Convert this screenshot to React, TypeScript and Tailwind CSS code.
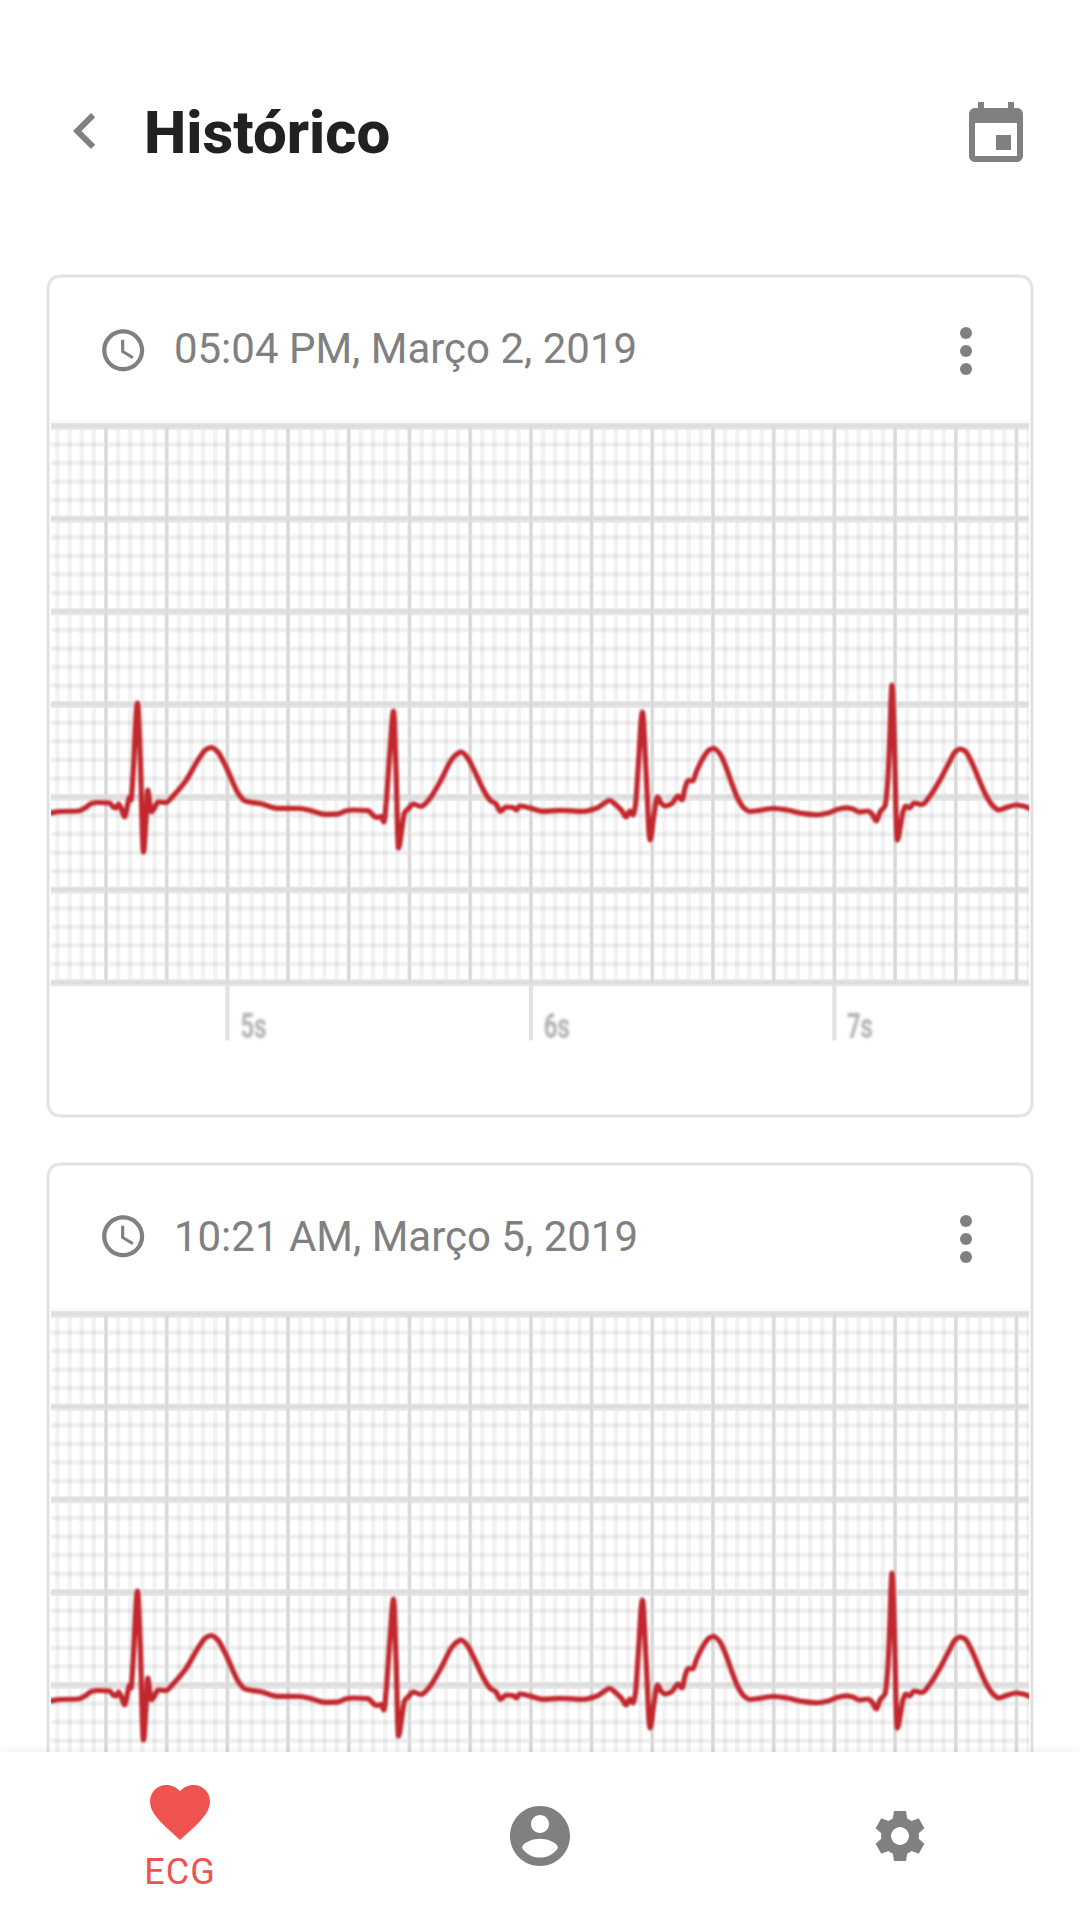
import React from "react";

type Point = [number, number];

const TRACE: Point[] = [
  [48, 813.5], [51, 813], [60, 811.5], [78, 811], [85, 808], [89, 805], [93, 803], [98, 802.5], [110, 803],
  [113, 807], [116, 808], [118.5, 804], [121, 808], [124.5, 817], [128, 803], [129.5, 797], [131, 800], [133, 775],
  [137.5, 703], [140, 750], [143.5, 852], [146, 820], [147.8, 790], [149.5, 801], [151.5, 812], [154, 809],
  [158, 802], [166, 802.5], [173, 796], [185, 782], [200, 757], [206, 749.5], [211.5, 747.5], [217, 751], [227, 769],
  [238, 793], [245, 801], [262, 804], [277, 808.3], [300, 808.5], [312, 811], [325, 814.3], [337, 814.2],
  [346, 810.8], [353, 810], [368, 810.7], [372, 814], [376, 817.5], [381, 816.5], [384, 822], [386, 805],
  [390, 750], [393.5, 711], [396, 770], [398.5, 848], [402, 828], [404.5, 813], [409, 808], [413, 804],
  [421, 806.5], [427, 802], [440, 782], [452, 759], [457, 754], [461, 752], [467, 757], [475, 772], [483, 789],
  [490, 800], [496, 804], [500.5, 811.5], [506, 807], [513, 807.5], [516.5, 810], [519.5, 806], [530, 808],
  [543, 811.3], [560, 810.3], [583, 811.3], [597, 808], [604, 803.5], [609.5, 800.5], [616, 805], [622, 811],
  [626, 817], [630, 811], [633, 815], [635.5, 805], [638, 770], [642.5, 712], [646, 770], [650, 840],
  [654, 815], [657.5, 797], [661, 803], [665, 806], [672, 803.5], [678, 796], [682, 800], [685, 788],
  [688, 780.5], [692.5, 781], [697, 770], [705, 755], [710, 749.5], [714, 748.5], [720, 754], [726, 767],
  [732, 784], [738, 799], [744, 808], [750, 811.5], [760, 810.3], [773, 808.5], [787, 810], [800, 813],
  [816, 814.8], [828, 813], [838, 809.3], [846, 807.8], [853, 809], [859, 812], [868, 811], [872, 814],
  [876.5, 821], [880, 812], [885, 806], [887.5, 785], [889.5, 745], [892, 685], [894, 730], [897.3, 840],
  [901, 823], [903, 812], [905.5, 806], [909.5, 808], [914, 803], [922, 804.5], [930, 796], [940, 780],
  [950, 761], [955, 752], [960, 749], [965, 751], [972, 763], [980, 782], [988, 799], [993, 806], [999, 810],
  [1007, 807.3], [1016, 805], [1023, 806], [1032, 809.5],
];

// Monotone cubic interpolation: keeps every peak exactly at its sample.
function smoothPath(p: Point[]): string {
  const d = p.slice(1).map((q, i) => (q[1] - p[i][1]) / (q[0] - p[i][0]));
  const m = p.map((_, i) => {
    if (i === 0) return d[0];
    if (i === p.length - 1) return d[i - 1];
    if (d[i - 1] * d[i] <= 0) return 0;
    return (2 * d[i - 1] * d[i]) / (d[i - 1] + d[i]);
  });
  let out = `M${p[0][0]} ${p[0][1]}`;
  for (let i = 1; i < p.length; i++) {
    const h = (p[i][0] - p[i - 1][0]) / 3;
    out += `C${(p[i - 1][0] + h).toFixed(2)} ${(p[i - 1][1] + m[i - 1] * h).toFixed(2)} ${(p[i][0] - h).toFixed(2)} ${(p[i][1] - m[i] * h).toFixed(2)} ${p[i][0]} ${p[i][1]}`;
  }
  return out;
}

const TRACE_PATH = smoothPath(TRACE);
const range = (a: number, b: number) => Array.from({ length: b - a }, (_, i) => a + i);
const X0 = 106;
const DX = 60.7;
const Y0 = 426;
const DY = 92.75;

function EcgChart({ id }: { id: string }) {
  return (
    <svg className="block h-[640px] w-[978px]" viewBox="51 420 978 640">
      <defs>
        <filter id={`${id}-trace`} x="-2%" y="-10%" width="104%" height="120%" colorInterpolationFilters="sRGB">
          <feGaussianBlur stdDeviation="0.9" />
        </filter>
        <filter id={`${id}-label`} x="-30%" y="-30%" width="160%" height="160%" colorInterpolationFilters="sRGB">
          <feGaussianBlur stdDeviation="1.4" />
        </filter>
      </defs>
      <rect x="51" y="420" width="978" height="3" fill="#fafafa" />
      {range(-4, 77).filter((i) => i % 5 !== 0).map((i) => (
        <rect key={i} x={X0 + (i * DX) / 5 - 2.2} y="426" width="4.4" height="558" fill="#f3f3f3" />
      ))}
      {range(0, 30).filter((i) => i % 5 !== 0).map((i) => (
        <g key={i}>
          <rect x="51" y={Y0 + (i * DY) / 5 - 3.2} width="978" height="6.4" fill="#000" fillOpacity="0.022" />
          <rect x="51" y={Y0 + (i * DY) / 5 - 1.7} width="978" height="3.4" fill="#000" fillOpacity="0.035" />
        </g>
      ))}
      {range(0, 7).map((i) => (
        <g key={i}>
          <rect x="51" y={Y0 + i * DY - 3.2} width="978" height="7" fill="#e6e6e6" />
          <rect x="51" y={Y0 + i * DY - 1.7} width="978" height="3.2" fill="#dedede" />
        </g>
      ))}
      {range(0, 16).map((i) => (
        <g key={i}>
          <rect x={X0 + i * DX - 2} y="427" width="4" height="557" fill="#e2e2e2" />
          <rect x={X0 + i * DX - 1} y="427" width="2" height="557" fill="#d9d9d9" />
        </g>
      ))}
      {["5s", "6s", "7s"].map((label, i) => (
        <g key={label}>
          <rect x={X0 + (2 + i * 5) * DX - 2} y="984" width="4" height="56.5" fill="#e2e2e2" />
          <text
            x={240.5 + i * 303.2}
            y="1037.5"
            fontSize="35"
            fontWeight="700"
            fill="#b0b0b0"
            textLength="26"
            lengthAdjust="spacingAndGlyphs"
            filter={`url(#${id}-label)`}
          >
            {label}
          </text>
        </g>
      ))}
      <path
        d={TRACE_PATH}
        fill="none"
        stroke="#c1272d"
        strokeWidth="5.2"
        strokeLinejoin="round"
        filter={`url(#${id}-trace)`}
      />
    </svg>
  );
}

function ClockIcon() {
  return (
    <svg className="h-[50.4px] w-[50.4px] fill-[#808080]" viewBox="0 0 24 24">
      <path d="M11.99 2C6.47 2 2 6.48 2 12s4.47 10 9.99 10C17.52 22 22 17.52 22 12S17.52 2 11.99 2zM12 20c-4.42 0-8-3.58-8-8s3.58-8 8-8 8 3.58 8 8-3.58 8-8 8z" />
      <path d="M12.5 7H11v6l5.25 3.15.75-1.23-4.5-2.67z" />
    </svg>
  );
}

function RecordCard({ id, date, raised }: { id: string; date: string; raised?: boolean }) {
  return (
    <article className="h-[844px] w-[988px] shrink-0 rounded-[14px] border border-[#f0f0f0] shadow-[inset_0_0_0_2px_#e0e0e0,inset_0_0_0_3px_#f0f0f0]">
      <div className="flex h-[145px] items-center pt-[7px] pr-[31px] pl-[51px]">
        <div className={raised ? "mb-[5px]" : "mb-[1px]"}>
          <ClockIcon />
        </div>
        <span className="-mt-[4px] ml-[25.5px] flex-1 text-[42px] leading-[50px] whitespace-nowrap text-[#808080]">{date}</span>
        <svg className="h-[72px] w-[72px] fill-[#808080]" viewBox="0 0 24 24">
          <circle cx="12" cy="6" r="2" />
          <circle cx="12" cy="12" r="2" />
          <circle cx="12" cy="18" r="2" />
        </svg>
      </div>
      <div className="px-[4px]">
        <EcgChart id={id} />
      </div>
    </article>
  );
}

export default function App() {
  return (
    <div className="flex h-[1920px] w-[1080px] flex-col overflow-hidden bg-white font-['Roboto',sans-serif]">
      <header className="flex h-[274px] shrink-0 items-start pr-[48px] pl-[49px]">
        <svg className="mt-[95px] h-[72px] w-[72px] fill-[#808080]" viewBox="0 0 24 24">
          <path d="M15.41 7.41L14 6l-6 6 6 6 1.41-1.41L10.83 12z" />
        </svg>
        <h1 className="mt-[97px] ml-[23px] flex-1 text-[60px] leading-[72px] font-extrabold text-[#212121]">Histórico</h1>
        <svg className="mt-[99px] h-[72px] w-[72px] fill-[#808080]" viewBox="0 0 24 24">
          <path d="M17 12h-5v5h5v-5zM16 1v2H8V1H6v2H5c-1.11 0-1.99.9-1.99 2L3 19c0 1.1.89 2 2 2h14c1.1 0 2-.9 2-2V5c0-1.1-.9-2-2-2h-1V1h-2zm3 18H5V8h14v11z" />
        </svg>
      </header>
      <main className="flex min-h-0 flex-1 flex-col items-center gap-[44px] overflow-hidden">
        <RecordCard id="first" date="05:04 PM, Março 2, 2019" />
        <RecordCard id="second" date="10:21 AM, Março 5, 2019" raised />
      </main>
      <nav className="relative grid h-[168px] shrink-0 grid-cols-3 bg-white shadow-[0_0_10px_rgba(0,0,0,0.08)]">
        <div className="flex flex-col items-center pt-[24px]">
          <svg className="h-[72px] w-[72px] fill-[#ef5350]" viewBox="0 0 24 24">
            <path d="M12 21.35l-1.45-1.32C5.4 15.36 2 12.28 2 8.5 2 5.42 4.42 3 7.5 3c1.74 0 3.41.81 4.5 2.09C13.09 3.81 14.76 3 16.5 3 19.58 3 22 5.42 22 8.5c0 3.78-3.4 6.86-8.55 11.54L12 21.35z" />
          </svg>
          <span className="mt-[2px] text-[36px] leading-[44px] tracking-[1px] text-[#ef5350]">ECG</span>
        </div>
        <div className="flex items-center justify-center">
          <svg className="h-[72px] w-[72px] fill-[#808080]" viewBox="0 0 24 24">
            <path d="M12 2C6.48 2 2 6.48 2 12s4.48 10 10 10 10-4.48 10-10S17.52 2 12 2zm0 3c1.66 0 3 1.34 3 3s-1.34 3-3 3-3-1.34-3-3 1.34-3 3-3zm0 14.2c-2.5 0-4.71-1.28-6-3.22.03-1.99 4-3.08 6-3.08 1.99 0 5.97 1.09 6 3.08-1.29 1.94-3.5 3.22-6 3.22z" />
          </svg>
        </div>
        <div className="flex items-center justify-center">
          <svg className="h-[60px] w-[60px] fill-[#808080]" viewBox="-30 -30 60 60">
            <path
              fillRule="evenodd"
              d="M-6-25H6L7.2-17.5Q9.7-16.5 11.6-15L18.7-17.7L24.4-7.7L18.7-2.8Q19.2 0 18.7 2.8L24.4 7.7L18.7 17.7L11.6 15Q9.7 16.5 7.2 17.5L6 25H-6L-7.2 17.5Q-9.7 16.5-11.6 15L-18.7 17.7L-24.4 7.7L-18.7 2.8Q-19.2 0-18.7-2.8L-24.4-7.7L-18.7-17.7L-11.6-15Q-9.7-16.5-7.2-17.5ZM0-9A9 9 0 1 0 0 9A9 9 0 1 0 0-9Z"
            />
          </svg>
        </div>
      </nav>
    </div>
  );
}
